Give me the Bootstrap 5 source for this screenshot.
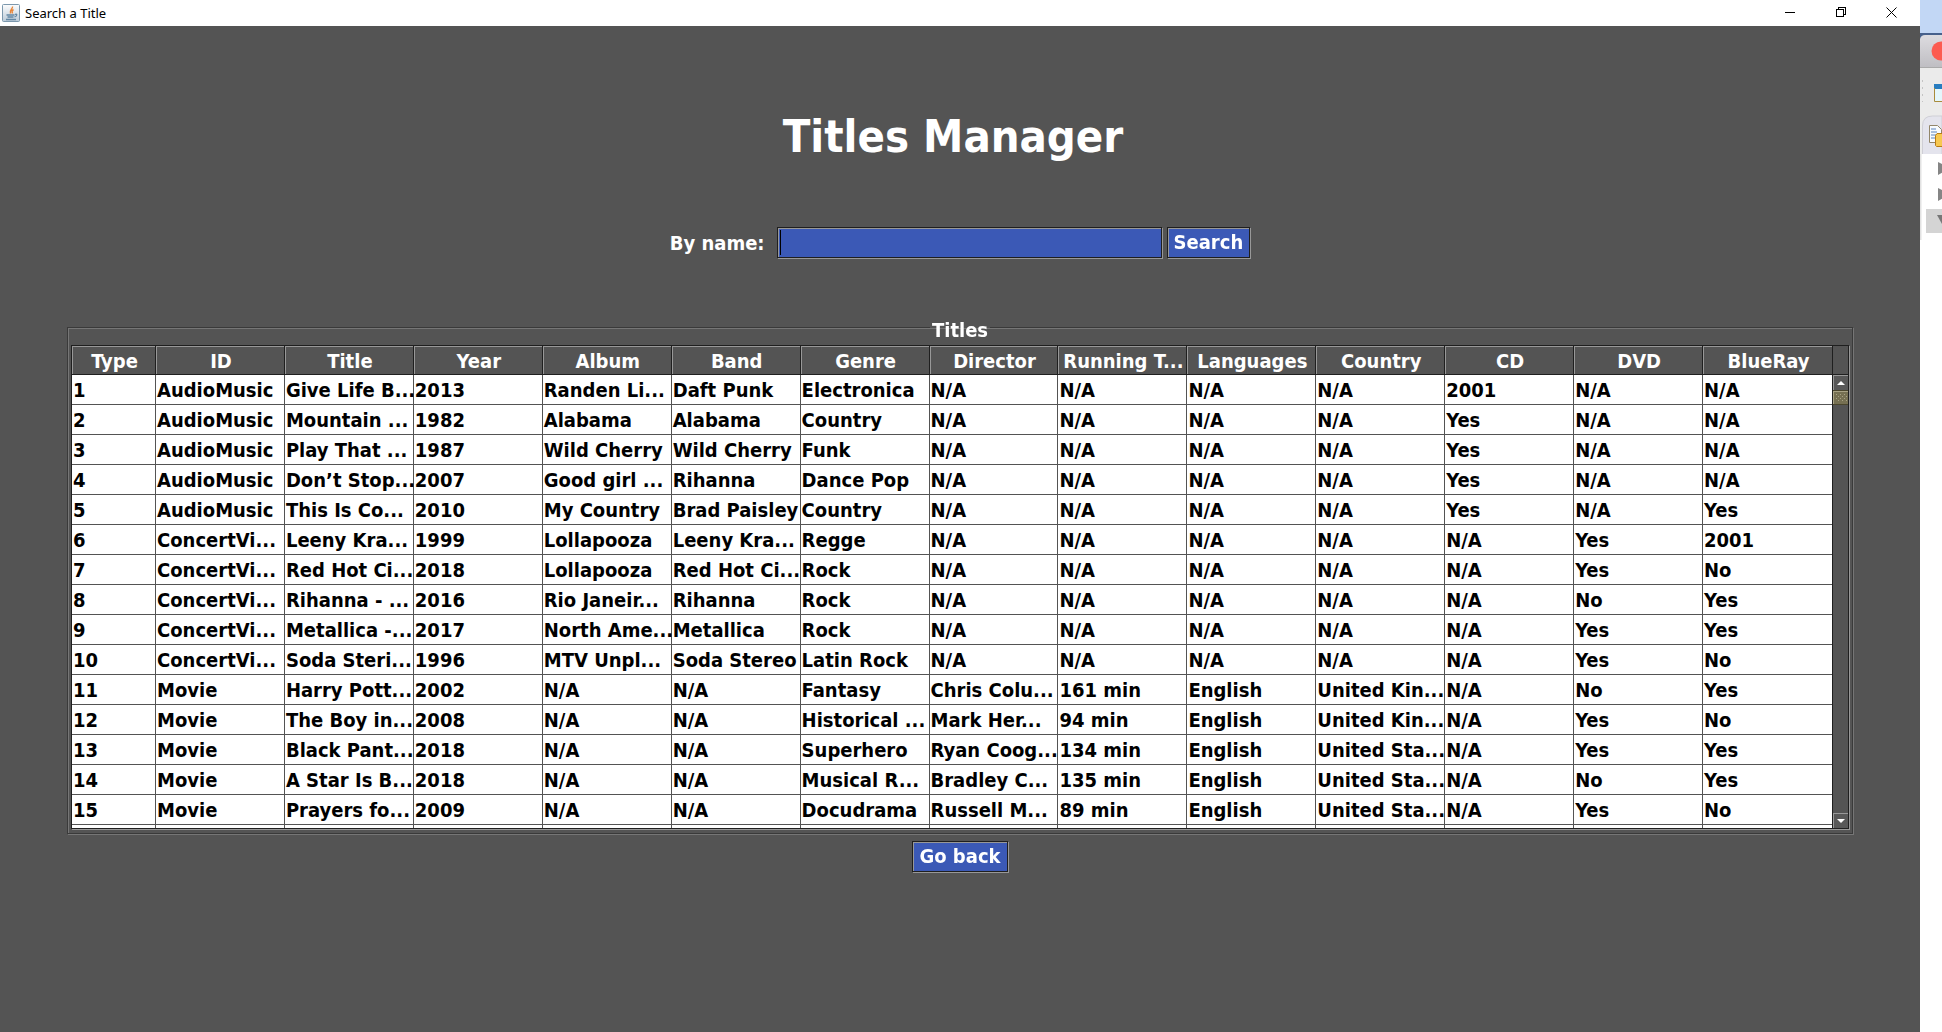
<!DOCTYPE html>
<html lang="en">
<head>
<meta charset="utf-8">
<meta name="viewport" content="width=device-width, initial-scale=1">
<title>Search a Title</title>
<link href="https://cdn.jsdelivr.net/npm/bootstrap@5.3.0/dist/css/bootstrap.min.css" rel="stylesheet">
<style>
  :root { --panel: #545454; --field: #3b59b6; --shade: #1f1f1f; --shine: #989898; }
  body { font-family: "Noto Sans", sans-serif; background: #fff; overflow-x: hidden; }
  .app-window { background: var(--panel); color: #fff; font: bold 20px/24px Tahoma, "DejaVu Sans Condensed", "Noto Sans", sans-serif; }
  .title-strip { height: 26px; background: #fff; color: #000; font: 13px/26px "Noto Sans", sans-serif; padding: 0 3px 0 2px; }
  .title-strip button { width: 51px; height: 26px; padding: 0 0 2px; border: 0; background: none; line-height: 0; }
  .title-strip .app-name { margin-left: 5px; }
  .heading { font-size: 45px; line-height: 58px; font-weight: bold; margin: 82px 0 61px; padding-right: 14px; }
  .swing-box { border: 1px solid var(--shade); border-radius: 0; background: var(--field); color: #fff; height: 31px; font: inherit;
    box-shadow: inset 1px 1px var(--shine), 1px 1px var(--shine); }
  .swing-box:hover, .swing-box:focus { background-color: var(--field); color: #fff; }
  .swing-btn { padding: 2px 6px 3px; }
  .name-input { width: 385px; padding: 0 3px; outline: 0; margin: 0 5px 0 12px; caret-color: transparent; }
  .name-input:placeholder-shown { background: linear-gradient(#000, #000) 2px 2px / 1px 25px no-repeat var(--field); }
  .name-input:not(:placeholder-shown) { caret-color: #000; }
  .titles-frame { margin: 54px 67px 7px; padding: 0 3px 4px; border: 1px solid #3a3a3a;
    box-shadow: inset 1px 1px #767676, 1px 1px #767676; }
  .titles-frame legend { float: none; width: auto; font: inherit; margin: 0 auto 3px; padding: 6px 2px 0; }
  .table-frame { border: 1px solid var(--shade); box-shadow: 1px 1px var(--shine); max-height: 484px; overflow: hidden; }
  .titles-table { table-layout: fixed; width: 100%; border-collapse: separate; border-spacing: 0; background: #fff; color: #000; }
  .titles-table th { height: 29px; padding: 2px 0 0 2px; text-align: center; white-space: nowrap; background: var(--panel); color: #fff;
    border-right: 1px solid var(--shade); border-bottom: 1px solid var(--shade); box-shadow: inset 1px 1px var(--shine); }
  .titles-table td { height: 30px; padding: 0 0 0 1px; white-space: nowrap; border-right: 1px solid var(--panel); border-bottom: 1px solid var(--panel); }
  .titles-table tr > :last-child { border-right: 0; }
  .titles-table .type-col { width: 84px; }
  .scroll-rail { width: 16px; border-left: 1px solid var(--shade); }
  .scroll-rail .corner { height: 29px; border-bottom: 1px solid var(--shade); }
  .scroll-rail button { height: 15px; padding: 0; border: 0; background: #585858; line-height: 0; box-shadow: inset 1px 1px var(--shine); }
  .scroll-rail .thumb { height: 15px; line-height: 0; border-top: 1px solid #4a452c; border-bottom: 1px solid #4a452c; background: #767052; box-shadow: inset 1px 1px #a8a284; }
  .behind { width: 22px; background: #fff; }
</style>
</head>
<body>
<div class="d-flex min-vh-100">
  <main class="app-window flex-grow-1 d-flex flex-column">
    <header class="title-strip d-flex align-items-center">
      <svg width="18" height="18" viewBox="0 0 18 18" aria-hidden="true">
        <defs><linearGradient id="tile" x2="0" y2="1"><stop stop-color="#fdfdfd"/><stop offset="1" stop-color="#bccbd8"/></linearGradient></defs>
        <rect x=".5" y=".5" width="17" height="17" rx="1" fill="url(#tile)" stroke="#7c98ad"/>
        <path d="M10.500 2.500C11 5 7 6 8.500 9.500M11.500 5.500c-2 1-2 2-1 4" fill="none" stroke="#e8863a" stroke-width="1.400"/>
        <path d="M4.500 11h8M5.500 13h6M4 15.500h10M13 10.500c2-1 3 1-.5 2.500" fill="none" stroke="#6488a4" stroke-width="1.300"/>
      </svg>
      <span class="app-name">Search a Title</span>
      <div class="ms-auto d-flex">
        <button type="button" aria-label="Minimize"><svg width="10" height="10" shape-rendering="crispEdges"><path d="M0 5.500h10" stroke="#000"/></svg></button>
        <button type="button" aria-label="Restore"><svg width="10" height="10" shape-rendering="crispEdges"><path d="M.5 2.500h7v7h-7zM2.500 2.500v-2h7v7h-2" fill="none" stroke="#000"/></svg></button>
        <button type="button" aria-label="Close"><svg width="11" height="11"><path d="M.5.5l10 10M10.500.5l-10 10" stroke="#000"/></svg></button>
      </div>
    </header>
    <h1 class="heading text-center">Titles Manager</h1>
    <form class="d-flex justify-content-center align-items-center" onsubmit="return false">
      <label for="byName">By name:</label>
      <input id="byName" type="text" class="swing-box name-input" placeholder=" " autofocus>
      <button type="submit" class="swing-box swing-btn">Search</button>
    </form>
    <fieldset class="titles-frame">
      <legend>Titles</legend>
      <div class="table-frame d-flex">
        <div class="flex-grow-1 overflow-hidden">
          <table class="titles-table">
            <colgroup><col class="type-col"><col span="13"></colgroup>
            <thead><tr id="heads"></tr></thead>
            <tbody id="rows"></tbody>
          </table>
        </div>
        <div class="scroll-rail d-flex flex-column flex-shrink-0">
          <div class="corner"></div>
          <button type="button" aria-label="Scroll up"><svg width="8" height="4"><path d="M0 4l4-4 4 4z" fill="#fff"/></svg></button>
          <div class="thumb text-center"><svg width="12" height="12" shape-rendering="crispEdges"><path d="M1 3.500h10M3 5.500h10M1 7.500h10M3 9.500h10" stroke="#a8a284" stroke-dasharray="1 3"/></svg></div>
          <button type="button" class="mt-auto" aria-label="Scroll down"><svg width="8" height="4"><path d="M0 0l4 4 4-4z" fill="#fff"/></svg></button>
        </div>
      </div>
    </fieldset>
    <div class="text-center"><button type="button" class="swing-box swing-btn">Go back</button></div>
  </main>
  <aside class="behind flex-shrink-0" aria-hidden="true">
    <svg class="d-block" width="22" height="240">
      <defs><linearGradient id="bar" x2="0" y2="1"><stop stop-color="#dddce0"/><stop offset="1" stop-color="#bebdc2"/></linearGradient></defs>
      <path d="M0 0h22v34H0z" fill="#c2d7f5"/><path d="M0 33h22v6H0z" fill="#47618c"/>
      <path d="M0 68V39q1-4 5-4h17v33z" fill="url(#bar)"/>
      <circle cx="21" cy="51" r="9.500" fill="#fc5b50"/>
      <path d="M0 67h22v88H0z" fill="#ebebeb"/><path d="M0 67.500h22" stroke="#aaa"/>
      <path d="M2.500 80v22" stroke="#c4c4c4" stroke-dasharray="2 5"/>
      <path d="M14 84h8v18h-8z" fill="#e4f7fc"/><path d="M14 84h8v5h-8z" fill="#287dc0"/><path d="M14.500 88v13.500H22" fill="none" stroke="#a98b3c"/>
      <path d="M2.500 155v-29q0-10 10-10H22v39" fill="#e4e4ed" stroke="#cfcfd6"/>
      <path d="M9.500 125.500h8l4 4v13h-12z" fill="#f8fbff" stroke="#92866a"/>
      <path d="M11 129h5M11 132h6M11 135h6M11 138h4" stroke="#5b83bd"/>
      <path d="M16 134h6v12h-6z" fill="#f7c850"/><path d="M22 133.500h-5l-1.500 2v10l1 1H22" fill="none" stroke="#b77b14"/>
      <path d="M0 154h22v86H0z" fill="#fff"/><path d="M.5 154v86" stroke="#e2e2e2" stroke-width="2"/>
      <path d="M18 162l12 6-12 7zM18 188l12 6-12 7z" fill="#858585"/>
      <path d="M6 209h16v24H6z" fill="#d4d4d4"/><path d="M17 215h9l-4 9z" fill="#777"/>
    </svg>
  </aside>
</div>
<script>
  const heads = "Type|ID|Title|Year|Album|Band|Genre|Director|Running T...|Languages|Country|CD|DVD|BlueRay";
  const titles = [
    "1|AudioMusic|Give Life B...|2013|Randen Li...|Daft Punk|Electronica|N/A|N/A|N/A|N/A|2001|N/A|N/A",
    "2|AudioMusic|Mountain ...|1982|Alabama|Alabama|Country|N/A|N/A|N/A|N/A|Yes|N/A|N/A",
    "3|AudioMusic|Play That ...|1987|Wild Cherry|Wild Cherry|Funk|N/A|N/A|N/A|N/A|Yes|N/A|N/A",
    "4|AudioMusic|Don’t Stop...|2007|Good girl ...|Rihanna|Dance Pop|N/A|N/A|N/A|N/A|Yes|N/A|N/A",
    "5|AudioMusic|This Is Co...|2010|My Country|Brad Paisley|Country|N/A|N/A|N/A|N/A|Yes|N/A|Yes",
    "6|ConcertVi...|Leeny Kra...|1999|Lollapooza|Leeny Kra...|Regge|N/A|N/A|N/A|N/A|N/A|Yes|2001",
    "7|ConcertVi...|Red Hot Ci...|2018|Lollapooza|Red Hot Ci...|Rock|N/A|N/A|N/A|N/A|N/A|Yes|No",
    "8|ConcertVi...|Rihanna - ...|2016|Rio Janeir...|Rihanna|Rock|N/A|N/A|N/A|N/A|N/A|No|Yes",
    "9|ConcertVi...|Metallica -...|2017|North Ame...|Metallica|Rock|N/A|N/A|N/A|N/A|N/A|Yes|Yes",
    "10|ConcertVi...|Soda Steri...|1996|MTV Unpl...|Soda Stereo|Latin Rock|N/A|N/A|N/A|N/A|N/A|Yes|No",
    "11|Movie|Harry Pott...|2002|N/A|N/A|Fantasy|Chris Colu...|161 min|English|United Kin...|N/A|No|Yes",
    "12|Movie|The Boy in...|2008|N/A|N/A|Historical ...|Mark Her...|94 min|English|United Kin...|N/A|Yes|No",
    "13|Movie|Black Pant...|2018|N/A|N/A|Superhero|Ryan Coog...|134 min|English|United Sta...|N/A|Yes|Yes",
    "14|Movie|A Star Is B...|2018|N/A|N/A|Musical R...|Bradley C...|135 min|English|United Sta...|N/A|No|Yes",
    "15|Movie|Prayers fo...|2009|N/A|N/A|Docudrama|Russell M...|89 min|English|United Sta...|N/A|Yes|No",
    "|||||||||||||"
  ];
  document.getElementById("heads").innerHTML = heads.split("|").map(h => `<th scope="col">${h}</th>`).join("");
  document.getElementById("rows").innerHTML = titles.map(r => "<tr>" + r.split("|").map(c => `<td>${c}</td>`).join("") + "</tr>").join("");
</script>
<script src="https://cdn.jsdelivr.net/npm/bootstrap@5.3.0/dist/js/bootstrap.bundle.min.js"></script>
</body>
</html>
